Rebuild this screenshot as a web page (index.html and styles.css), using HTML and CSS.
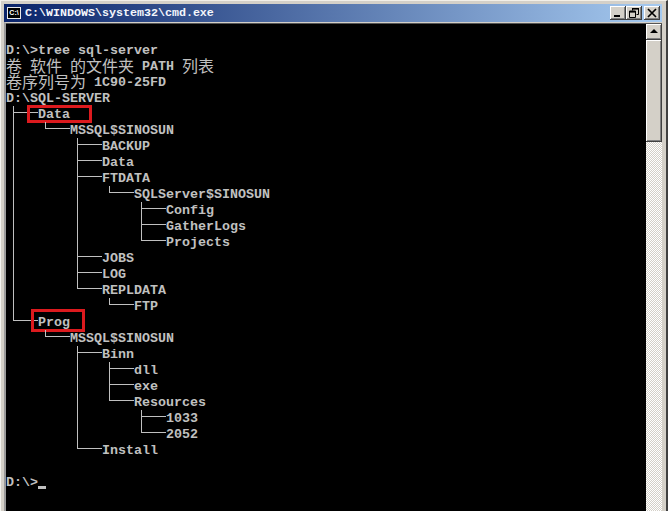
FILE: index.html
```html
<!DOCTYPE html>
<html lang="zh">
<head>
<meta charset="utf-8">
<title>cmd.exe</title>
<link rel="stylesheet" href="styles.css">
</head>
<body>
<div class="window">
  <div class="titlebar">
    <span class="appicon">C:\</span>
    <span class="title">C:\WINDOWS\system32\cmd.exe</span>
    <span class="buttons">
      <span class="btn"><svg width="16" height="14" viewBox="0 0 16 14"><rect x="4" y="9" width="6" height="2" fill="#000"/></svg></span>
      <span class="btn"><svg width="16" height="14" viewBox="0 0 16 14"><path d="M6.5 2.5h6v6h-2M6.5 2.5v2M3.5 5.5h6v6h-6zM3.5 5.5v-.5h6" fill="none" stroke="#000"/><rect x="6" y="2" width="7" height="1.6" fill="#000"/><rect x="3" y="5" width="7" height="1.6" fill="#000"/></svg></span>
      <span class="btn close"><svg width="16" height="14" viewBox="0 0 16 14"><path d="M4 3l8 8M12 3l-8 8" stroke="#000" stroke-width="1.7" fill="none"/></svg></span>
    </span>
  </div>
  <div class="client">
    <div class="console">
      <div class="row">D:\&gt;tree sql-server</div>
      <div class="row"><span class="cjk">卷</span> <span class="cjk">软件</span> <span class="cjk">的文件夹</span> PATH <span class="cjk">列表</span></div>
      <div class="row"><span class="cjk">卷序列号为</span> 1C90-25FD</div>
      <div class="row">D:\SQL-SERVER</div>
      <div class="row"><span class="cell tee"></span>Data<span class="mark mark-data"></span></div>
      <div class="row"><span class="cell pipe"></span><span class="cell elbow"></span>MSSQL$SINOSUN</div>
      <div class="row"><span class="cell pipe"></span><span class="cell"></span><span class="cell tee"></span>BACKUP</div>
      <div class="row"><span class="cell pipe"></span><span class="cell"></span><span class="cell tee"></span>Data</div>
      <div class="row"><span class="cell pipe"></span><span class="cell"></span><span class="cell tee"></span>FTDATA</div>
      <div class="row"><span class="cell pipe"></span><span class="cell"></span><span class="cell pipe"></span><span class="cell elbow"></span>SQLServer$SINOSUN</div>
      <div class="row"><span class="cell pipe"></span><span class="cell"></span><span class="cell pipe"></span><span class="cell"></span><span class="cell tee"></span>Config</div>
      <div class="row"><span class="cell pipe"></span><span class="cell"></span><span class="cell pipe"></span><span class="cell"></span><span class="cell tee"></span>GatherLogs</div>
      <div class="row"><span class="cell pipe"></span><span class="cell"></span><span class="cell pipe"></span><span class="cell"></span><span class="cell elbow"></span>Projects</div>
      <div class="row"><span class="cell pipe"></span><span class="cell"></span><span class="cell tee"></span>JOBS</div>
      <div class="row"><span class="cell pipe"></span><span class="cell"></span><span class="cell tee"></span>LOG</div>
      <div class="row"><span class="cell pipe"></span><span class="cell"></span><span class="cell elbow"></span>REPLDATA</div>
      <div class="row"><span class="cell pipe"></span><span class="cell"></span><span class="cell"></span><span class="cell elbow"></span>FTP</div>
      <div class="row"><span class="cell elbow"></span>Prog<span class="mark mark-prog"></span></div>
      <div class="row"><span class="cell"></span><span class="cell elbow"></span>MSSQL$SINOSUN</div>
      <div class="row"><span class="cell"></span><span class="cell"></span><span class="cell tee"></span>Binn</div>
      <div class="row"><span class="cell"></span><span class="cell"></span><span class="cell pipe"></span><span class="cell tee"></span>dll</div>
      <div class="row"><span class="cell"></span><span class="cell"></span><span class="cell pipe"></span><span class="cell tee"></span>exe</div>
      <div class="row"><span class="cell"></span><span class="cell"></span><span class="cell pipe"></span><span class="cell elbow"></span>Resources</div>
      <div class="row"><span class="cell"></span><span class="cell"></span><span class="cell pipe"></span><span class="cell"></span><span class="cell tee"></span>1033</div>
      <div class="row"><span class="cell"></span><span class="cell"></span><span class="cell pipe"></span><span class="cell"></span><span class="cell elbow"></span>2052</div>
      <div class="row"><span class="cell"></span><span class="cell"></span><span class="cell elbow"></span>Install</div>
      <div class="row"></div>
      <div class="row">D:\&gt;<span class="cursor"></span></div>
    </div>
    <div class="scrollbar">
      <div class="sb-btn"><svg width="14" height="14" viewBox="0 0 14 14"><path d="M7 4l4 4H3z" fill="#000"/></svg></div>
      <div class="sb-thumb"></div>
      <div class="sb-track"></div>
    </div>
  </div>
</div>
</body>
</html>
```
FILE: styles.css
```css
html, body { margin: 0; padding: 0; background: #d4d0c8; }
body { width: 668px; height: 511px; overflow: hidden; }
.window {
  width: 668px;
  height: 511px;
  box-sizing: border-box;
  display: flex;
  flex-direction: column;
  background: #d4d0c8;
  border-top: 1px solid #f2efe8;
  border-left: 1px solid #f4f4f0;
  border-right: 2px solid #404040;
  padding: 3px 4px 0 3px;
  overflow: hidden;
}
.titlebar {
  height: 18px;
  flex: none;
  display: flex;
  align-items: center;
  background: linear-gradient(90deg, #0a246a, #a6caf0);
}
.appicon {
  flex: none;
  width: 14px;
  height: 12px;
  margin-left: 3px;
  background: #000;
  border: 1px solid #e8e8e8;
  box-sizing: border-box;
  color: #fff;
  font: bold 7px/10px "Liberation Sans", sans-serif;
  text-align: center;
  overflow: hidden;
}
.title {
  margin-left: 4px;
  color: #f4f6fb;
  font: bold 11.67px/18px "Liberation Mono", monospace;
  white-space: pre;
}
.buttons { margin-left: auto; display: flex; margin-right: 2px; }
.btn {
  width: 16px;
  height: 14px;
  box-sizing: border-box;
  background: #d4d0c8;
  box-shadow: inset -1px -1px 0 #404040, inset 1px 1px 0 #fff, inset -2px -2px 0 #808080;
  display: block;
}
.btn svg { display: block; }
.btn.close { margin-left: 2px; }
.client {
  flex: 1;
  min-height: 0;
  display: flex;
  border-top: 1px solid #d4d0c8;
  box-shadow: inset 0 1px 0 #555;
  padding-top: 1px;
  border-left: 2px solid #9a9a9a;
}
.console {
  width: 640px;
  flex: none;
  background: #000;
  color: #c0c0c0;
  padding-top: 19px;
  font: bold 13.33px/16px "Liberation Mono", monospace;
  overflow: hidden;
}
.row {
  position: relative;
  height: 16px;
  white-space: pre;
}
.cjk {
  display: inline-block;
  height: 16px;
  margin-top: -2px;
  vertical-align: top;
  font: 16px/16px "Noto Sans CJK SC", sans-serif;
}
.cell {
  position: relative;
  display: inline-block;
  vertical-align: top;
  width: 32px;
  height: 16px;
  margin-top: -1px;
}
.pipe::before, .tee::before, .elbow::before {
  content: "";
  position: absolute;
  left: 7px;
  top: 0;
  width: 1px;
  height: 16px;
  background: #c0c0c0;
}
.elbow::before { height: 7px; }
.tee::after, .elbow::after {
  content: "";
  position: absolute;
  left: 7px;
  right: 0;
  top: 6px;
  height: 1px;
  background: #c0c0c0;
}
.mark {
  position: absolute;
  box-sizing: border-box;
  border: 3px solid #dc1a1e;
}
.mark-data { left: 21px; top: -2px; width: 65px; height: 18px; }
.mark-prog { left: 25px; top: -6px; width: 54px; height: 23px; }
.cursor {
  display: inline-block;
  vertical-align: top;
  width: 8px;
  height: 3px;
  margin-top: 11px;
  background: #c0c0c0;
}
.scrollbar {
  flex: none;
  width: 16px;
  display: flex;
  flex-direction: column;
}
.sb-btn, .sb-thumb {
  flex: none;
  box-sizing: border-box;
  background: #d4d0c8;
  box-shadow: inset -1px -1px 0 #404040, inset 1px 1px 0 #fff, inset -2px -2px 0 #808080;
}
.sb-btn { height: 16px; display: flex; align-items: center; justify-content: center; }
.sb-thumb { height: 102px; }
.sb-track {
  flex: 1;
  background-color: #fff;
  background-image: conic-gradient(#d4d0c8 25%, #fff 0 50%, #d4d0c8 0 75%, #fff 0);
  background-size: 2px 2px;
}
```
